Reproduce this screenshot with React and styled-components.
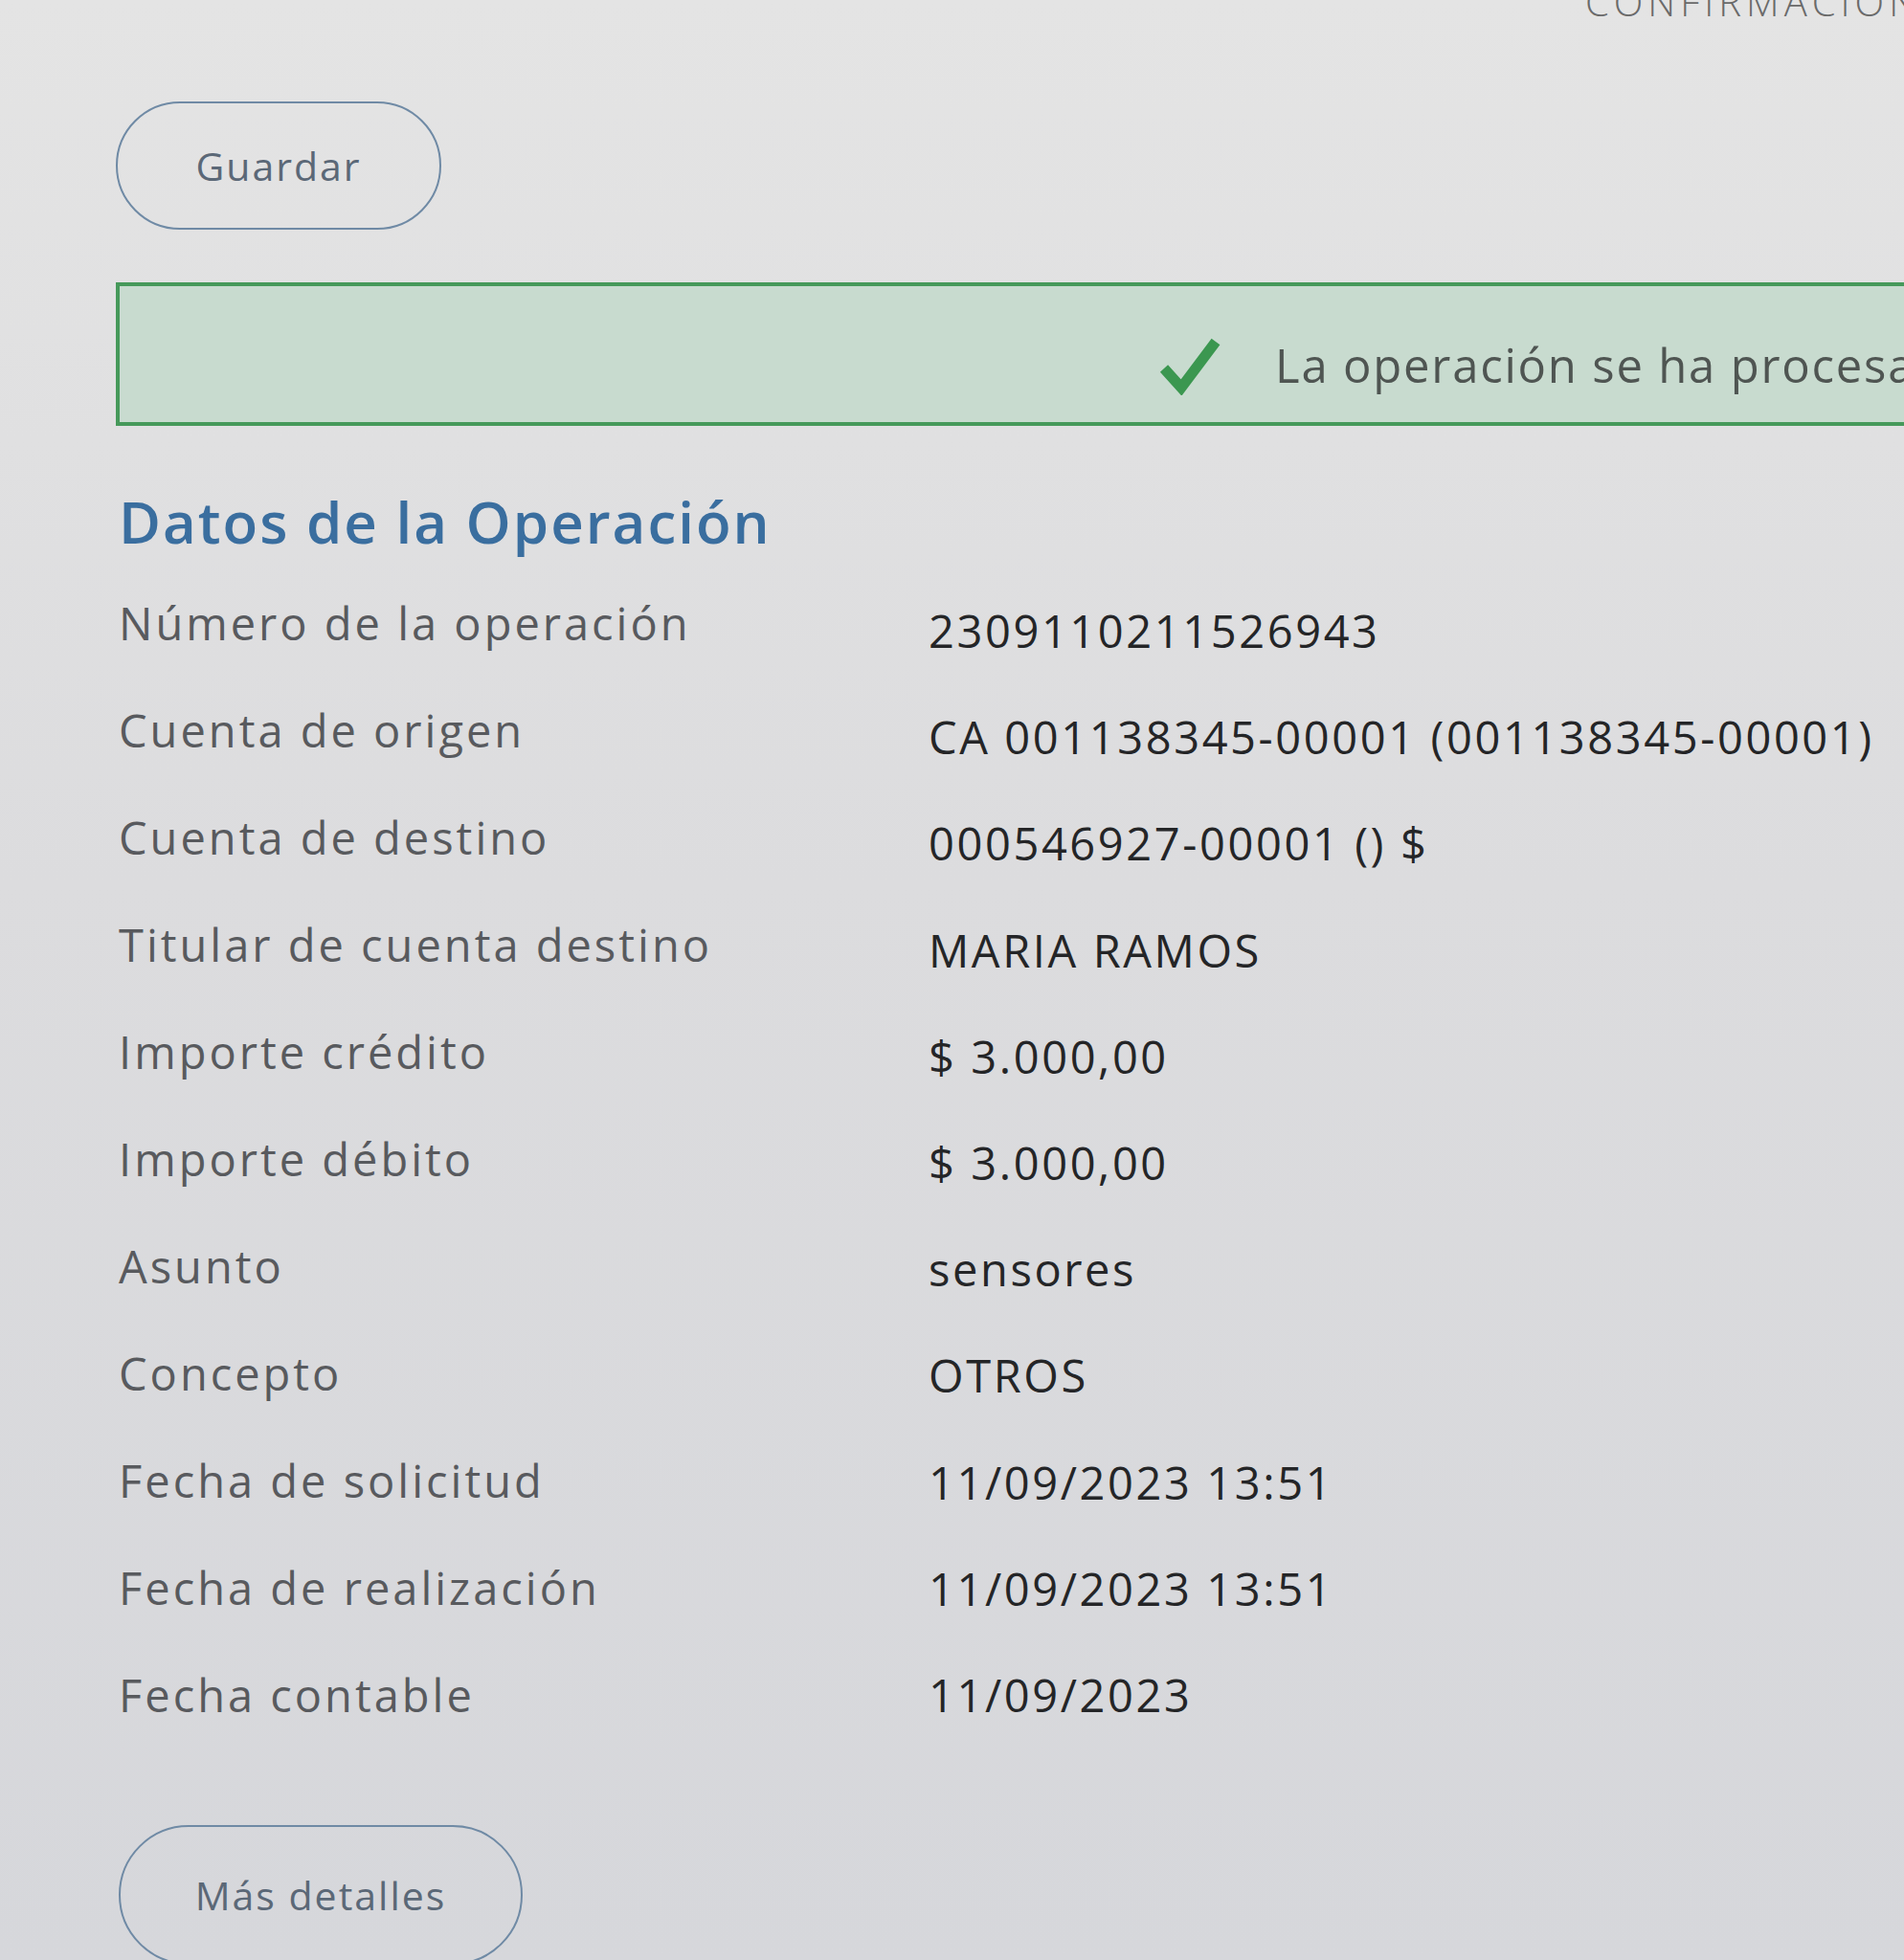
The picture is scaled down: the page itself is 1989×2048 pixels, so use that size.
import React from "react";
import styled, { createGlobalStyle } from "styled-components";

const GlobalStyle = createGlobalStyle`
  html, body {
    margin: 0;
    padding: 0;
    overflow: hidden;
  }
  body {
    width: 1989px;
    height: 2048px;
    background: linear-gradient(180deg, #e4e4e4 0%, #dcdcde 45%, #d6d7db 100%);
    font-family: "Open Sans", "Noto Sans", sans-serif;
  }
`;

const Page = styled.div`
  display: flex;
  flex-direction: column;
  align-items: flex-start;
  padding-left: 121px;
`;

const StepBar = styled.div`
  align-self: stretch;
  display: flex;
  justify-content: flex-end;
  height: 22px;
  overflow: hidden;
`;

const StepLabel = styled.span`
  margin-top: -20px;
  margin-right: -18px;
  font-size: 40px;
  font-weight: 300;
  letter-spacing: 5px;
  color: #6a6a6a;
  line-height: 44px;
  white-space: nowrap;
`;

const PillButton = styled.button`
  box-sizing: border-box;
  width: ${(p) => p.$width}px;
  height: ${(p) => p.$height}px;
  margin-top: ${(p) => p.$top}px;
  margin-left: ${(p) => p.$left || 0}px;
  border: 2px solid #6f8aa5;
  border-radius: ${(p) => p.$height / 2}px;
  background: transparent;
  color: #5b6877;
  font-family: "Open Sans", "Noto Sans", sans-serif;
  font-size: 41px;
  letter-spacing: 2px;
  cursor: pointer;
`;

const Banner = styled.div`
  box-sizing: border-box;
  margin-top: 55px;
  width: 1900px;
  height: 150px;
  display: flex;
  align-items: center;
  gap: 56px;
  padding: 22px 0 0 1085px;
  background: #c8dbcf;
  border: 4px solid #46995a;
  border-right: none;
  white-space: nowrap;
  overflow: hidden;

  svg {
    flex-shrink: 0;
  }
`;

const BannerText = styled.span`
  flex-shrink: 0;
  font-size: 49px;
  color: #4f5552;
  letter-spacing: 1.8px;
`;

const Heading = styled.h2`
  margin: 64px 0 14px 3px;
  font-size: 60px;
  line-height: 72px;
  font-weight: 600;
  color: #3a6e9f;
  letter-spacing: 2px;
`;

const DataList = styled.div`
  display: flex;
  flex-direction: column;
  margin-left: 3px;
`;

const DataRow = styled.div`
  display: grid;
  grid-template-columns: 846px 1fr;
  align-items: center;
  height: 112px;
  white-space: nowrap;
`;

const Label = styled.span`
  font-size: 47px;
  color: #585a5e;
  letter-spacing: 3px;
`;

const Value = styled.span`
  padding-top: ${(p) => p.$drop}px;
  font-size: 47px;
  font-weight: 500;
  color: #242527;
  letter-spacing: 2.6px;
`;

const CheckIcon = () => (
  <svg width="66" height="64" viewBox="0 0 66 64">
    <path
      d="M6 36 L24 56 L60 8"
      fill="none"
      stroke="#3b9750"
      strokeWidth="11"
      strokeLinecap="butt"
      strokeLinejoin="miter"
    />
  </svg>
);

const rows = [
  ["Número de la operación", "2309110211526943"],
  ["Cuenta de origen", "CA 001138345-00001 (001138345-00001)"],
  ["Cuenta de destino", "000546927-00001 () $"],
  ["Titular de cuenta destino", "MARIA RAMOS"],
  ["Importe crédito", "$ 3.000,00"],
  ["Importe débito", "$ 3.000,00"],
  ["Asunto", "sensores"],
  ["Concepto", "OTROS"],
  ["Fecha de solicitud", "11/09/2023 13:51"],
  ["Fecha de realización", "11/09/2023 13:51"],
  ["Fecha contable", "11/09/2023"],
];

export default function App() {
  return (
    <>
      <GlobalStyle />
      <Page>
        <StepBar>
          <StepLabel>CONFIRMACIÓN</StepLabel>
        </StepBar>
        <PillButton $width={340} $height={134} $top={84}>
          Guardar
        </PillButton>
        <Banner>
          <CheckIcon />
          <BannerText>La operación se ha procesado correctamente.</BannerText>
        </Banner>
        <Heading>Datos de la Operación</Heading>
        <DataList>
          {rows.map(([label, value], i) => (
            <DataRow key={label}>
              <Label>{label}</Label>
              <Value $drop={Math.max(0, 16 - i * 1.6)}>{value}</Value>
            </DataRow>
          ))}
        </DataList>
        <PillButton $width={422} $height={146} $top={80} $left={3}>
          Más detalles
        </PillButton>
      </Page>
    </>
  );
}
